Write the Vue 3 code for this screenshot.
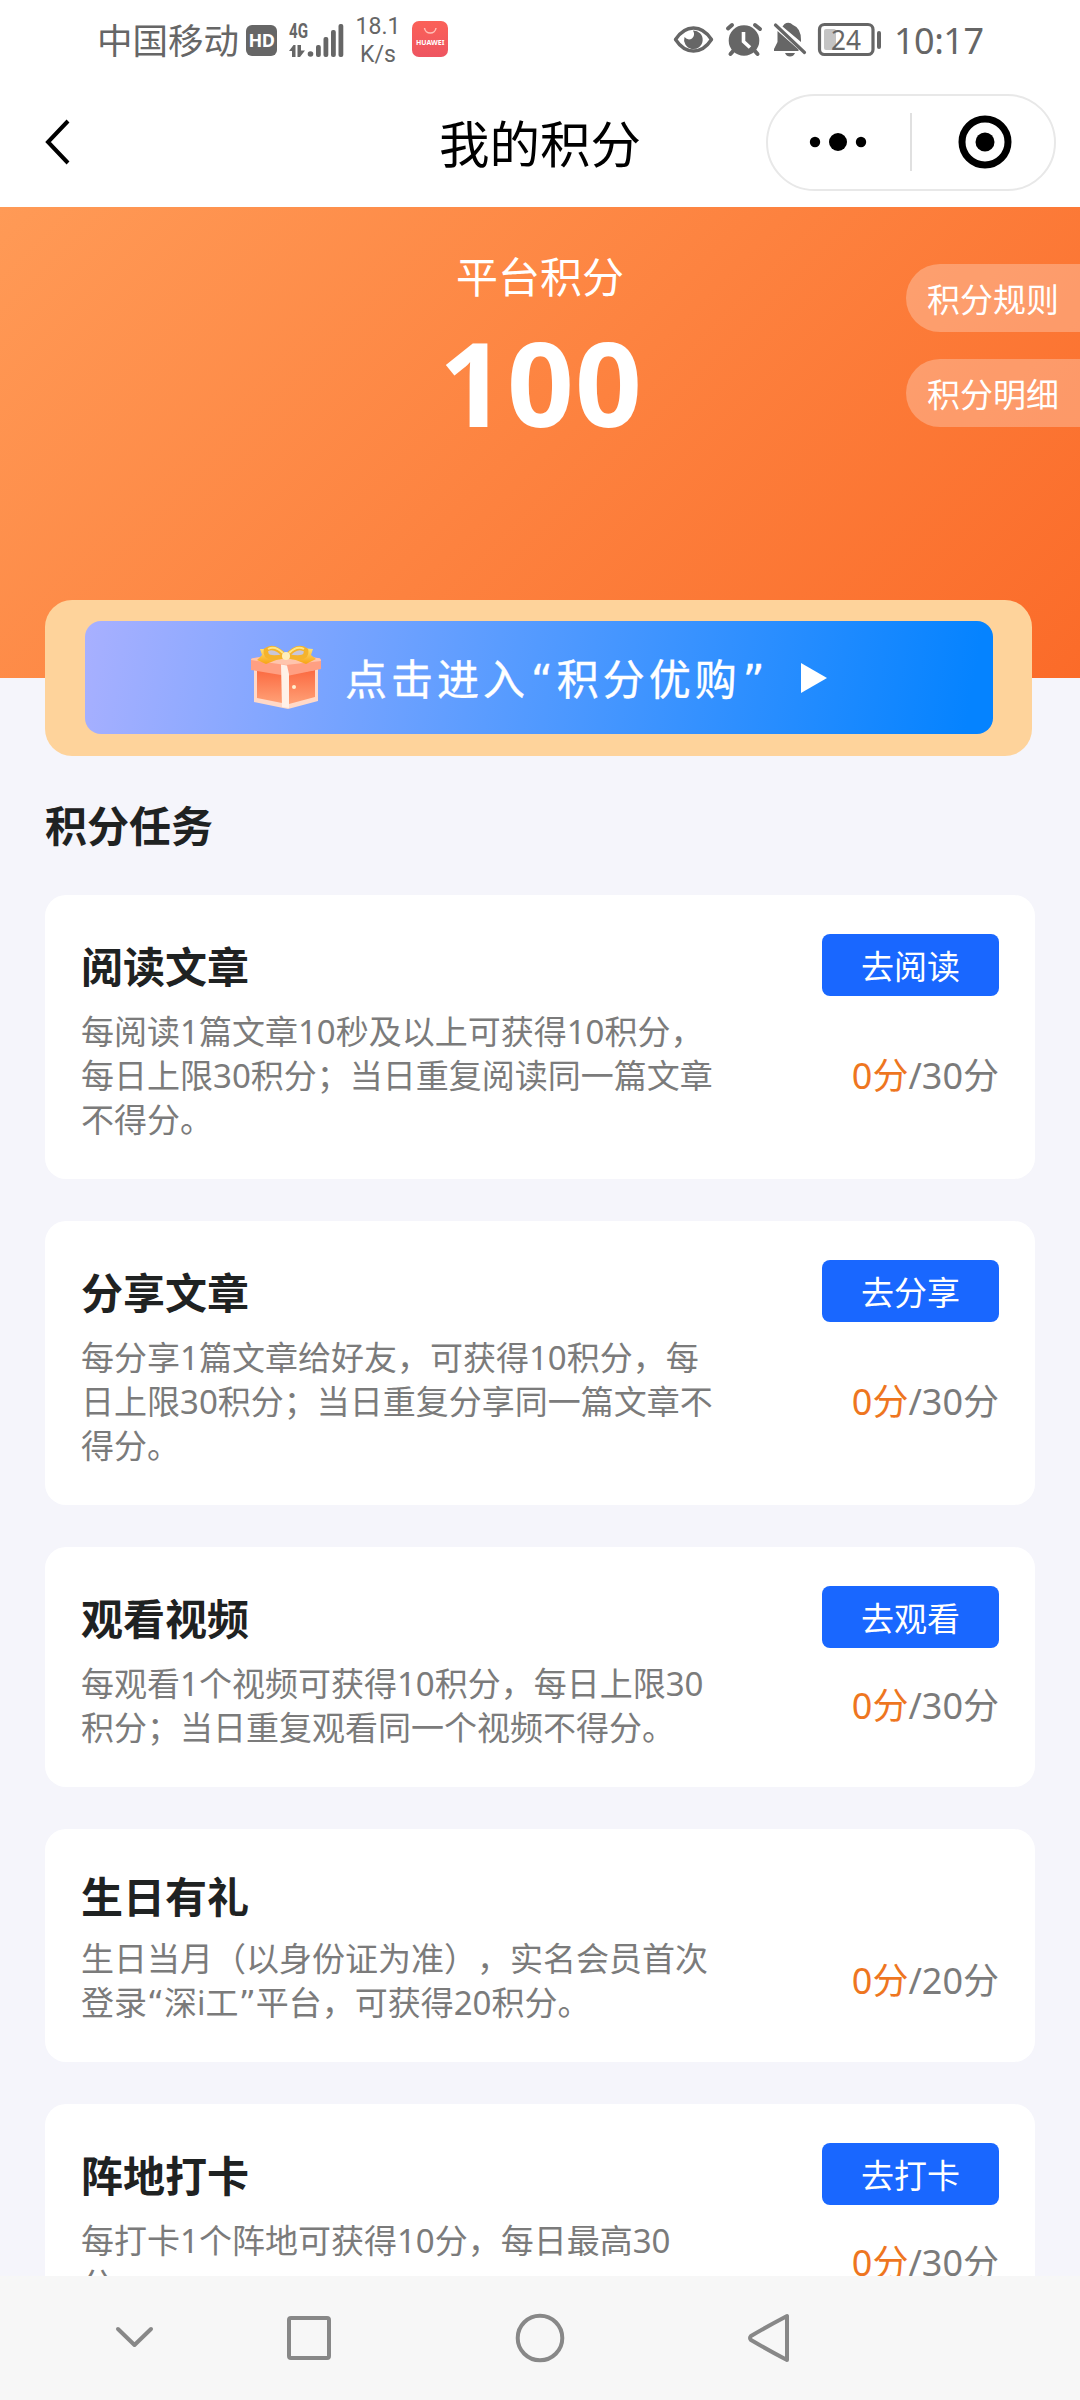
<script setup>
const tasks = [
  {
    title: '阅读文章',
    lines: ['每阅读1篇文章10秒及以上可获得10积分，', '每日上限30积分；当日重复阅读同一篇文章', '不得分。'],
    action: '去阅读',
    total: 30,
  },
  {
    title: '分享文章',
    lines: ['每分享1篇文章给好友，可获得10积分，每', '日上限30积分；当日重复分享同一篇文章不', '得分。'],
    action: '去分享',
    total: 30,
  },
  {
    title: '观看视频',
    lines: ['每观看1个视频可获得10积分，每日上限30', '积分；当日重复观看同一个视频不得分。'],
    action: '去观看',
    total: 30,
  },
  {
    title: '生日有礼',
    lines: ['生日当月（以身份证为准），实名会员首次', '登录“深i工”平台，可获得20积分。'],
    action: '',
    total: 20,
  },
  {
    title: '阵地打卡',
    lines: ['每打卡1个阵地可获得10分，每日最高30', '分。'],
    action: '去打卡',
    total: 30,
  },
]

// Quotation marks use their own face, so each line is split around them.
const segments = (line) => line.split(/([“”])/).filter(Boolean)
const isQuote = (part) => part === '“' || part === '”'
</script>

<template>
  <div class="screen">
    <header class="status">
      <span class="carrier">中国移动</span>
      <span class="hd">HD</span>
      <svg class="signal" width="56" height="36" viewBox="0 0 56 36">
        <text x="0" y="16" class="net" textLength="19" lengthAdjust="spacingAndGlyphs">4G</text>
        <g fill="#666">
          <path d="M0 29 L4.500 23 H6.500 V35 H3 V29 Z M8.500 23 H12 V28.500 H16 L11 35 H8.500 Z" />
          <circle cx="21.500" cy="32" r="2.800" />
          <rect x="27" y="23" width="4.800" height="12" rx="2" />
          <rect x="34.500" y="15" width="4.800" height="20" rx="2" />
          <rect x="42" y="8" width="4.800" height="27" rx="2" />
          <rect x="49.500" y="2" width="4.800" height="33" rx="2" />
        </g>
      </svg>
      <span class="speed"><span>18.1</span><span>K/s</span></span>
      <span class="store">
        <svg width="36" height="36" viewBox="0 0 36 36">
          <path d="M12.500 7 A5.800 5.800 0 0 0 24 7" fill="none" stroke="#ffc0b8" stroke-width="1.500" />
          <text x="4" y="24" class="brand" textLength="28.500" lengthAdjust="spacingAndGlyphs">HUAWEI</text>
        </svg>
      </span>
      <span class="grow"></span>
      <svg class="glyphs" width="210" height="40" viewBox="0 0 210 40">
        <path d="M3.500 19.500 Q11 8 21.500 8 Q32 8 39.500 19.500 Q32 31 21.500 31 Q11 31 3.500 19.500 Z" fill="none" stroke="#666" stroke-width="3.400" stroke-linejoin="round" />
        <path d="M21 10.500 A9.300 9.300 0 1 1 12.500 17 Q16 21 20 18.500 Q23.500 15 21 10.500 Z" fill="#666" />
        <g stroke="#666" stroke-width="4" stroke-linecap="round" fill="none">
          <path d="M56 8.500 L60 5 M83 5 L88 9 M58.500 34 L62 30 M85.500 34 L82 30" />
        </g>
        <circle cx="72" cy="20.500" r="15.300" fill="#666" />
        <path d="M71.500 12 V21.500 L78 27.500" fill="none" stroke="#fff" stroke-width="3.600" />
        <path d="M112.500 4 Q117 1 121 5 Q129 8 129 20 V22 L110.500 6.500 Z M105.500 11 L126.500 29.500 V31 H102 V29 L105.500 22 Z" fill="#666" />
        <path d="M113 33 H123 Q121.500 36.500 118 36.500 Q114.500 36.500 113 33 Z" fill="#666" />
        <path d="M103.500 5 L132.500 32.500" stroke="#666" stroke-width="3.200" stroke-linecap="round" />
        <rect x="147.500" y="4.500" width="53.500" height="30" rx="5" fill="none" stroke="#666" stroke-width="3.200" />
        <rect x="152" y="9" width="12" height="21" rx="2" fill="#c4c4c4" />
        <rect x="205" y="11" width="4" height="18" rx="2" fill="#666" />
        <text x="159" y="30" class="level" textLength="30" lengthAdjust="spacingAndGlyphs">24</text>
      </svg>
      <span class="clock">10:17</span>
    </header>

    <nav class="titlebar">
      <svg class="back" width="30" height="50" viewBox="0 0 30 50">
        <path d="M25 4 L5 25 L25 46" fill="none" stroke="#000" stroke-width="4" />
      </svg>
      <h1>我的积分</h1>
      <div class="capsule">
        <svg width="60" height="30" viewBox="0 0 60 30">
          <circle cx="7" cy="15" r="5.200" /><circle cx="30" cy="15" r="9" /><circle cx="53" cy="15" r="5.200" />
        </svg>
        <i></i>
        <svg width="60" height="60" viewBox="0 0 60 60">
          <circle cx="30" cy="30" r="23" fill="none" stroke="#000" stroke-width="7" />
          <circle cx="30" cy="30" r="9.500" />
        </svg>
      </div>
    </nav>

    <main class="content">
      <section class="hero">
        <div class="label">平台积分</div>
        <div class="points">100</div>
        <div class="links">
          <a>积分规则</a>
          <a>积分明细</a>
        </div>
      </section>

      <section class="banner">
        <div class="enter">
          <svg class="gift" width="72" height="66" viewBox="0 0 72 66">
            <defs>
              <linearGradient id="boxFace" x1="0" y1="0" x2="0" y2="1">
                <stop offset="0" stop-color="#fb6a41" /><stop offset="1" stop-color="#ffa076" />
              </linearGradient>
              <linearGradient id="ribbon" x1="0" y1="0" x2="0" y2="1">
                <stop offset="0" stop-color="#ffe37a" /><stop offset="1" stop-color="#f7a313" />
              </linearGradient>
            </defs>
            <path d="M4 22 L36 27 L68 22 V56 L38 64 L4 57 Z" fill="#ffd9c8" />
            <path d="M7 25 L32 29 V58 L7 53 Z" fill="url(#boxFace)" />
            <path d="M39 29 L65 25 V52 L39 59 Z" fill="url(#boxFace)" />
            <path d="M1 15 Q1 13 4 13 L30 9 L68 13 Q71 13 71 16 V24 L37 31 L1 25 Z" fill="#ff9f82" />
            <path d="M1 15 Q1 13 4 13 L30 9 L68 13 Q71 13 71 16 L36 20 Z" fill="#ffc4ad" />
            <path d="M31 19.500 L37 20.500 L39 29 V63 L32 62 Z" fill="#fff1e8" />
            <circle cx="44" cy="42" r="2" fill="#fff0cf" />
            <path d="M34 12 L16 19 L7 15 L12 10 L10 4 L22 4 Z M38 12 L56 19 L66 14 L61 10 L63 4 L51 3 Z" fill="url(#ribbon)" />
            <path d="M35 11 Q24 -1 16 5 Q14 16 35 11 Z M37 11 Q47 -1 56 5 Q58 16 37 11 Z" fill="#c9c6d8" stroke="#f5b32c" stroke-width="4.500" stroke-linejoin="round" />
            <path d="M18 4 Q25 0 33 8 M54 4 Q47 0 39 8" fill="none" stroke="#ffe586" stroke-width="2" />
            <circle cx="36" cy="11" r="4" fill="#ffeeba" />
          </svg>
          <span class="cta">点击进入<b>“</b>积分优购<b>”</b></span>
          <svg class="play" width="28" height="32" viewBox="0 0 28 32"><path d="M1 1 L27 16 L1 31 Z" fill="#fff" /></svg>
        </div>
      </section>

      <h2>积分任务</h2>

      <article v-for="task in tasks" :key="task.title" class="card" :class="{ plain: !task.action }">
        <div class="top">
          <h3>{{ task.title }}</h3>
          <button v-if="task.action">{{ task.action }}</button>
        </div>
        <div class="detail">
          <div class="desc">
            <p v-for="line in task.lines" :key="line"><span v-for="(part, i) in segments(line)" :key="i" :class="{ quote: isQuote(part) }">{{ part }}</span></p>
          </div>
          <div class="score"><em>0分</em>/{{ task.total }}分</div>
        </div>
      </article>
    </main>

    <footer class="keys">
      <svg width="1080" height="124" viewBox="0 0 1080 124" fill="none" stroke="#888" stroke-width="4" stroke-linejoin="round" stroke-linecap="round">
        <path d="M118 53 L134.500 69 L151 53" />
        <rect x="289" y="42" width="40" height="40" rx="2" />
        <circle cx="540" cy="62" r="22.300" />
        <path d="M787 40 V84 Q768 74 751 64 Q749 62 751 60 Q768 50 787 40 Z" />
      </svg>
    </footer>
  </div>
</template>

<style>
body {
  margin: 0;
}
</style>

<style scoped>
.screen {
  width: 1080px;
  height: 2400px;
  overflow: hidden;
  display: flex;
  flex-direction: column;
  background: #f5f5fb;
  font-family: "Noto Sans", "Noto Sans CJK SC", sans-serif;
  text-spacing-trim: space-all;
}
h1, h2, h3, p {
  margin: 0;
}
.status {
  height: 80px;
  flex: none;
  box-sizing: border-box;
  padding: 0 96px 0 97px;
  display: flex;
  align-items: center;
  background: #fff;
  color: #666;
}
.carrier {
  width: 149px;
  margin-top: -2px;
  font: 35.500px/80px "Noto Sans CJK SC", sans-serif;
  white-space: nowrap;
}
.hd {
  width: 31px;
  height: 31px;
  border-radius: 6px;
  background: #666;
  color: #fff;
  font: bold 18px/31px "Noto Sans", sans-serif;
  text-align: center;
  letter-spacing: -0.5px;
}
.signal {
  margin-left: 12px;
  margin-top: -1px;
  overflow: visible;
}
.net {
  font: bold 20px Roboto, sans-serif;
  fill: #666;
}
.speed {
  width: 50px;
  margin-left: 8px;
  margin-top: 2px;
  display: flex;
  flex-direction: column;
  align-items: center;
  font: 23px/28px Roboto, sans-serif;
}
.store {
  width: 36px;
  height: 36px;
  margin-left: 9px;
  margin-top: -2px;
  border-radius: 7px;
  background: linear-gradient(#fb6158, #ee5561);
}
.store svg {
  display: block;
}
.brand {
  font: bold 7.500px "Noto Sans", sans-serif;
  fill: #fff;
}
.grow {
  flex: 1;
}
.level {
  font: 27px "Noto Sans", sans-serif;
  fill: #666;
}
.clock {
  width: 90px;
  margin-left: 12px;
  margin-top: 2px;
  font: 36px/80px "Noto Sans", sans-serif;
  letter-spacing: -0.5px;
}
.titlebar {
  height: 127px;
  flex: none;
  box-sizing: border-box;
  padding: 0 24px 3px 43px;
  display: grid;
  grid-template-columns: 290px 1fr 290px;
  align-items: center;
  background: #fff;
}
h1 {
  font: 50.500px/80px "Noto Sans CJK SC", sans-serif;
  text-align: center;
  padding-right: 19px;
  margin-top: -2px;
  white-space: nowrap;
}
.capsule {
  height: 97px;
  box-sizing: border-box;
  border: 2px solid #e8e8e8;
  border-radius: 49px;
  display: flex;
  align-items: center;
  padding-left: 40px;
}
.capsule i {
  width: 2px;
  height: 58px;
  margin: 0 43px 0 42px;
  background: #e0e0e0;
}
.content {
  flex: 1;
  min-height: 0;
  overflow: hidden;
}
.hero {
  position: relative;
  height: 471px;
  box-sizing: border-box;
  padding-top: 38px;
  text-align: center;
  color: #fff;
  background: linear-gradient(135deg, #ff9a56 0%, #fb6b29 100%);
}
.label {
  font: 42px/60px "Noto Sans CJK SC", sans-serif;
}
.points {
  font: bold 117px/140px "Noto Sans", sans-serif;
  letter-spacing: 1px;
  margin-top: 7px;
  padding-left: 2px;
}
.links {
  position: absolute;
  right: 0;
  top: 57px;
  display: flex;
  flex-direction: column;
  gap: 27px;
}
.links a {
  width: 174px;
  height: 68px;
  box-sizing: border-box;
  padding-left: 21px;
  border-radius: 34px 0 0 34px;
  background: rgba(255, 255, 255, 0.27);
  font: 33px/68px "Noto Sans CJK SC", sans-serif;
  text-align: left;
}
.banner {
  position: relative;
  width: 987px;
  height: 156px;
  box-sizing: border-box;
  margin: -78px 0 0 45px;
  padding: 21px 39px 21px 40px;
  border-radius: 27px;
  background: #fed39b;
}
.enter {
  height: 113px;
  border-radius: 16px;
  display: flex;
  align-items: center;
  padding-left: 165px;
  color: #fff;
  background: linear-gradient(100deg, #a8b0ff 0%, #5a9cff 45%, #0583ff 97%);
}
.cta {
  width: 435px;
  margin-left: 23px;
  margin-top: -2px;
  font: 42px/80px "Noto Sans CJK SC", sans-serif;
  -webkit-text-stroke: 0.4px #fff;
  letter-spacing: 4px;
  white-space: nowrap;
}
.cta b {
  font: 42px/1 "DejaVu Sans", sans-serif;
  margin-left: 2px;
}
.play {
  margin-left: 20px;
}
h2 {
  padding-left: 45px;
  margin-top: 38px;
  height: 101px;
  color: #1f2222;
  font: bold 42px/60px "Noto Sans CJK SC", sans-serif;
}
.card {
  width: 990px;
  box-sizing: border-box;
  margin: 0 0 42px 45px;
  padding: 39px 36px 37px 36px;
  border-radius: 21px;
  background: #fff;
}
.top {
  height: 62px;
  display: flex;
  justify-content: space-between;
}
h3 {
  color: #1f2222;
  font: bold 42px/61px "Noto Sans CJK SC", sans-serif;
}
button {
  width: 177px;
  height: 62px;
  border: 0;
  padding: 0;
  border-radius: 8px;
  background: #1967ff;
  color: #fff;
  font: 33px/62px "Noto Sans CJK SC", sans-serif;
}
.detail {
  margin-top: 14px;
  display: flex;
  justify-content: space-between;
  align-items: center;
  color: #7b7b7b;
}
.desc p {
  height: 44px;
  font-size: 33px;
  line-height: 44px;
  white-space: nowrap;
}
.quote {
  font-family: "DejaVu Sans", sans-serif;
  line-height: 1;
}
.score {
  font-size: 36px;
  line-height: 44px;
  white-space: nowrap;
}
.score em {
  font-style: normal;
  color: #ee761f;
}
.plain {
  padding-top: 35px;
}
.plain .top {
  height: 59px;
}
.keys {
  height: 124px;
  flex: none;
  background: #f7f7f7;
}
.keys svg {
  display: block;
}
</style>
